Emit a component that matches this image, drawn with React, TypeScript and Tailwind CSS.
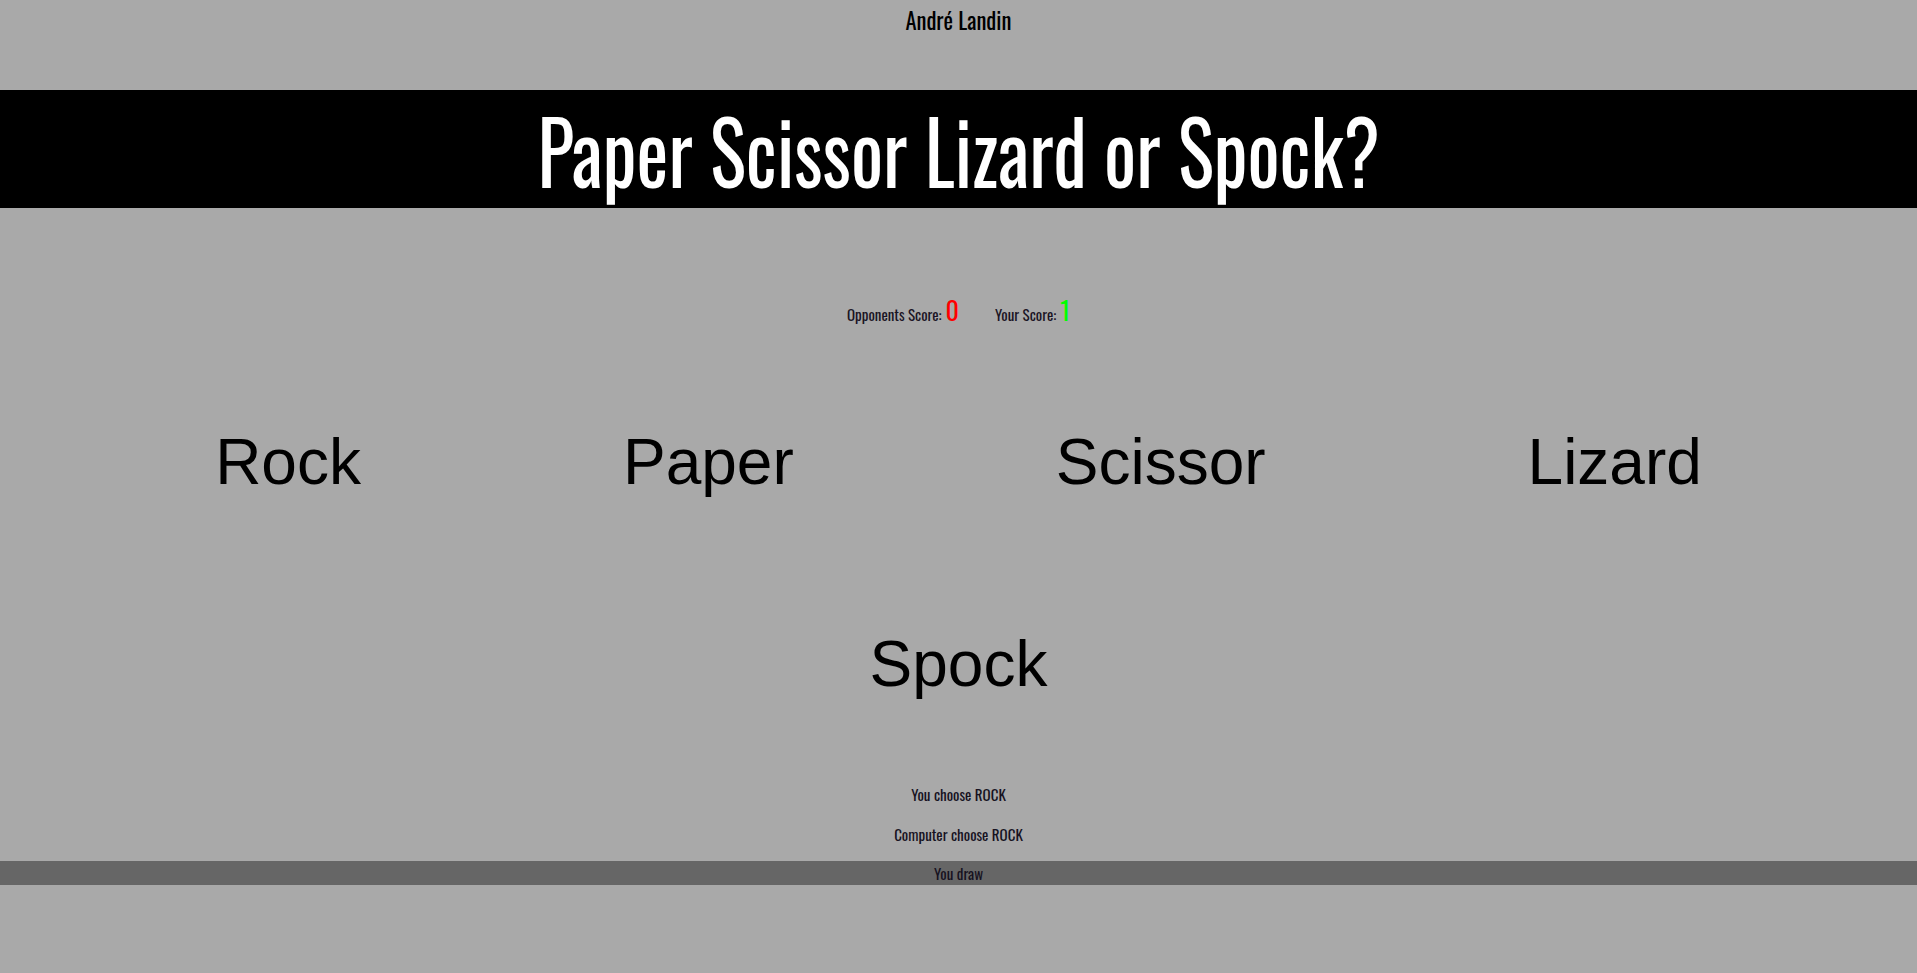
import React from "react";

const condensed = "font-['Oswald','DejaVu_Sans_Condensed','Liberation_Sans_Narrow','DejaVu_Sans',sans-serif] [font-stretch:condensed]";

const choices = ["Rock", "Paper", "Scissor", "Lizard", "Spock"];

const App = () => {
  return (
    <main className="min-h-[973px] bg-[#a9a9a9] text-black">
      <div className="h-[90px] flex justify-center">
        <p className={`${condensed} text-[24px] leading-[30px] pt-[4px] origin-top inline-block scale-x-[0.94]`}>
          André Landin
        </p>
      </div>

      <header className="h-[118px] bg-black flex items-center justify-center">
        <h1 className={`${condensed} text-white text-[86px] leading-none inline-block scale-x-[0.88] whitespace-nowrap`}>
          Paper Scissor Lizard or Spock?
        </h1>
      </header>

      <section className="mt-[88px] h-[30px] flex items-center justify-center gap-[36px] text-[#1a1424]">
        <div className={`${condensed} text-[15px] flex items-baseline gap-[4px]`}>
          <span>Opponents Score:</span>
          <span className="text-[26px] leading-none text-[#ff0000]">0</span>
        </div>
        <div className={`${condensed} text-[15px] flex items-baseline gap-[4px]`}>
          <span>Your Score:</span>
          <span className="text-[26px] leading-none text-[#00ff00]">1</span>
        </div>
      </section>

      <section className="mt-[100px] flex flex-wrap justify-center gap-y-[130px] px-[82px]">
        {choices.map((c) => (
          <button
            key={c}
            className="mx-[131px] font-['Liberation_Sans',Arial,sans-serif] text-[64px] leading-[72px] cursor-pointer"
          >
            {c}
          </button>
        ))}
      </section>

      <section className={`${condensed} mt-[84px] text-[15px] text-center text-[#16121f]`}>
        <p className="h-[40px] leading-[20px]">You choose ROCK</p>
        <p className="h-[37px] leading-[20px]">Computer choose ROCK</p>
        <p className="h-[24px] leading-[24px] bg-[#666666]">You draw</p>
      </section>
    </main>
  );
};

export default App;
